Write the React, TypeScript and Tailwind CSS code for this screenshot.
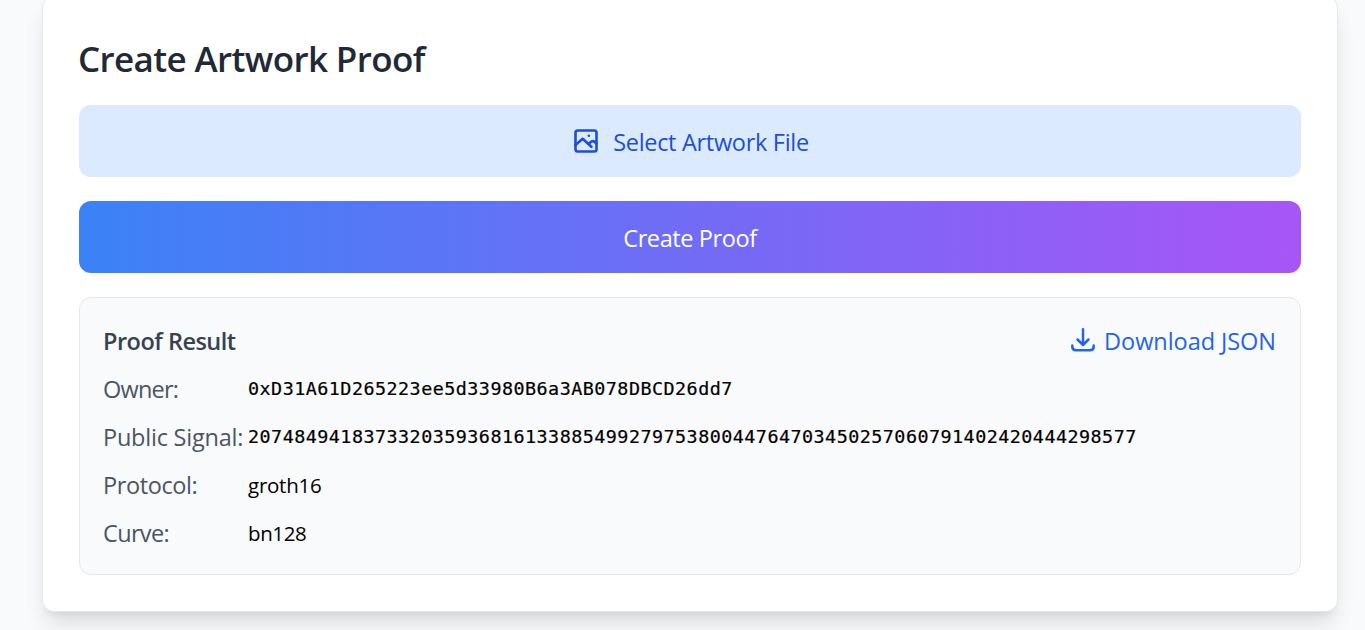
const segoe = "font-['Segoe_UI','Open_Sans',sans-serif]";
const mono = "font-['DejaVu_Sans_Mono',monospace] text-[18.4px] tracking-[0.47px] [-webkit-text-stroke:0.2px_black]";

function ArtworkIcon() {
  return (
    <svg className="mr-[15px] h-6 w-6 -translate-y-[2px]" viewBox="0 0 24 24" fill="none" stroke="currentColor" strokeWidth="2.6" strokeLinecap="round" strokeLinejoin="round">
      <rect x="1.5" y="1.5" width="21" height="21" rx="2.2" />
      <path d="M1.5 16L8.7 9.8L17.4 17.8" />
      <path d="M14.7 14.8L17.4 12.6Q19.8 11.2 22.4 14.7" />
      <path d="M14.9 6.7h.01" />
    </svg>
  );
}

function DownloadIcon() {
  return (
    <svg className="mr-[9px] h-6 w-6 -translate-y-[2px]" viewBox="0 0 24 24" fill="none" stroke="currentColor" strokeWidth="2.5" strokeLinecap="round" strokeLinejoin="round">
      <path d="M12 1.3V17M6.5 11.5L12 17L17.5 11.5" />
      <path d="M1.3 17.5V18.5Q1.3 22.2 5 22.2H19Q22.7 22.2 22.7 18.5V17.5" />
    </svg>
  );
}

const rows = [
  { label: "Owner:", tracking: "tracking-[-0.8px]", value: "0xD31A61D265223ee5d33980B6a3AB078DBCD26dd7", style: mono },
  { label: "Public Signal:", tracking: "tracking-[-0.22px]", value: "20748494183733203593681613388549927975380044764703450257060791402420444298577", style: mono },
  { label: "Protocol:", tracking: "tracking-[-0.4px]", value: "groth16", style: "text-[20.5px] tracking-[-0.25px]" },
  { label: "Curve:", tracking: "tracking-[-0.65px]", value: "bn128", style: "text-[20.5px] tracking-[-0.4px]" },
];

export default function App() {
  return (
    <main className={`h-[630px] overflow-hidden bg-[#f9fafb] ${segoe}`}>
      <section className="-mt-1 ml-[42px] h-[616px] w-[1296px] rounded-xl border border-gray-200 bg-white px-9 pt-9 shadow-[0_15px_22px_-4px_rgba(0,0,0,0.12),0_6px_9px_-6px_rgba(0,0,0,0.1)]">
        <h1 className="-ml-px flex h-12 items-center pt-1 text-[35px] font-semibold tracking-[-0.62px] text-[#1f2937]">Create Artwork Proof</h1>
        <button className="mt-6 flex h-[72px] w-full items-center justify-center rounded-xl bg-[#dbeafe] pt-[3px] pl-[3px] text-[23.5px] tracking-[-0.3px] text-[#1d4ed8]">
          <ArtworkIcon />
          <span>Select Artwork File</span>
        </button>
        <button className="mt-6 flex h-[72px] w-full items-center justify-center rounded-xl bg-[linear-gradient(to_right,#3b82f6,#a855f7)] pt-1 text-[23.5px] tracking-[-0.4px] text-white">
          Create Proof
        </button>
        <div className="mt-6 h-[278px] rounded-xl border border-[#e5e7eb] bg-[#f9fafb] px-6 pt-6">
          <div className="flex h-10 items-center justify-between">
            <h2 className="-ml-px text-[23.5px] font-semibold tracking-[-0.5px] text-[#374151]">Proof Result</h2>
            <button className="flex items-center text-[23.5px] tracking-[-0.05px] text-[#2563eb]">
              <DownloadIcon />
              <span>Download JSON</span>
            </button>
          </div>
          <dl className="flex flex-col gap-3 pt-[9px]">
            {rows.map((row) => (
              <div key={row.label} className="flex h-9 items-center">
                <dt className={`-ml-px w-[145px] whitespace-nowrap pt-[2px] text-[23.5px] text-[#4b5563] ${row.tracking}`}>{row.label}</dt>
                <dd className={`whitespace-nowrap text-black ${row.style}`}>{row.value}</dd>
              </div>
            ))}
          </dl>
        </div>
      </section>
    </main>
  );
}
